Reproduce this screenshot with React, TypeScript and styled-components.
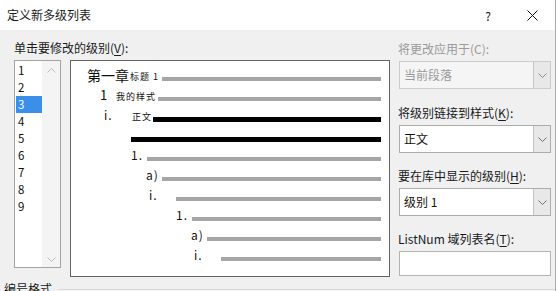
import styled, { createGlobalStyle } from 'styled-components';

const GlobalStyle = createGlobalStyle`
  html, body {
    margin: 0;
    padding: 0;
    background: #ffffff;
  }
  body {
    font-family: "Noto Sans CJK SC", "Noto Sans", sans-serif;
    color: #1a1a1a;
  }
`;

const Window = styled.div`
  width: 555px;
  height: 291px;
  border-right: 1px solid #a9a9a9;
  background: #f0f0f0;
  overflow: hidden;
  display: flex;
  flex-direction: column;
`;

const TitleBar = styled.div`
  height: 30px;
  flex-shrink: 0;
  background: #ffffff;
  display: flex;
  align-items: center;
  padding-left: 7px;
  font-size: 12px;
`;

const TitleText = styled.span`
  flex: 1;
  line-height: 16px;
  margin-top: -1px;
`;

const TitleButton = styled.span<{ $w: number }>`
  width: ${p => p.$w}px;
  height: 30px;
  display: flex;
  align-items: center;
  justify-content: center;
  font-size: 12px;
  color: #111;
`;

const Body = styled.div`
  display: flex;
  gap: 8px;
  padding: 10px 0 0 14px;
`;

const LeftPane = styled.div`
  width: 376px;
  display: flex;
  flex-direction: column;
`;

const Label = styled.div<{ $disabled?: boolean }>`
  font-size: 12px;
  line-height: 16px;
  height: 16px;
  white-space: nowrap;
  color: ${p => (p.$disabled ? '#9a9a9a' : '#1a1a1a')};
  margin-bottom: 4px;
`;

const Key = styled.span`
  text-decoration: underline;
  text-underline-offset: 2px;
`;

const ListRow = styled.div`
  display: flex;
  align-items: flex-start;
  gap: 9px;
`;

const ListBox = styled.div`
  width: 47px;
  height: 208px;
  box-sizing: border-box;
  border: 1px solid #a3a3a3;
  background: #ffffff;
  display: flex;
`;

const ListItems = styled.div`
  width: 27px;
  padding: 1px 0 0 1px;
  box-sizing: border-box;
`;

const ListItem = styled.div<{ $selected?: boolean }>`
  height: 17px;
  line-height: 17px;
  padding-left: 2px;
  font-size: 11.5px;
  background: ${p => (p.$selected ? '#3c8fe8' : 'transparent')};
  color: ${p => (p.$selected ? '#ffffff' : '#111111')};
`;

const ScrollTrack = styled.div`
  width: 18px;
  background: #f4f4f4;
  display: flex;
  flex-direction: column;
  justify-content: space-between;
  align-items: center;
  padding: 7px 0 5px;
`;

const Preview = styled.div`
  width: 321px;
  height: 217px;
  box-sizing: border-box;
  border: 1px solid #646464;
  background: #ffffff;
  padding-top: 6px;
`;

const LevelRow = styled.div<{ $indent: number }>`
  height: 20px;
  display: flex;
  align-items: flex-start;
  padding-left: ${p => p.$indent}px;
  padding-right: 8px;
`;

const Num = styled.span<{ $w: number; $size: number; $spacing: number }>`
  width: ${p => p.$w}px;
  flex-shrink: 0;
  font-size: ${p => p.$size}px;
  line-height: 16px;
  color: #111;
  white-space: nowrap;
  letter-spacing: ${p => p.$spacing}px;
`;

const StyleName = styled.span<{ $w: number }>`
  width: ${p => p.$w}px;
  flex-shrink: 0;
  font-size: 9px;
  line-height: 16px;
  padding-top: 2px;
  letter-spacing: 1px;
  white-space: nowrap;
  color: #111;
`;

const Bar = styled.div<{ $dark?: boolean }>`
  flex: 1;
  margin-top: 10px;
  height: ${p => (p.$dark ? 5 : 4)}px;
  background: ${p => (p.$dark ? '#000000' : '#a6a6a6')};
`;

const RightPane = styled.div`
  width: 153px;
  padding-top: 1px;
  display: flex;
  flex-direction: column;
`;

const Field = styled.div<{ $top: number }>`
  margin-top: ${p => p.$top}px;
`;

const Combo = styled.div<{ $disabled?: boolean }>`
  margin-left: 1px;
  width: 152px;
  height: 28px;
  box-sizing: border-box;
  border: 1px solid ${p => (p.$disabled ? '#cccccc' : '#acacac')};
  background: ${p => (p.$disabled ? '#f5f5f5' : '#ffffff')};
  display: flex;
`;

const ComboText = styled.span<{ $disabled?: boolean }>`
  flex: 1;
  padding-left: 4px;
  font-size: 12px;
  line-height: 26px;
  color: ${p => (p.$disabled ? '#9a9a9a' : '#111111')};
`;

const ComboButton = styled.span`
  width: 17px;
  box-sizing: border-box;
  border-left: 1px solid #c4c4c4;
  background: #e8e8e8;
  display: flex;
  align-items: center;
  justify-content: center;
`;

const TextInput = styled.div`
  margin-left: 1px;
  width: 152px;
  height: 25px;
  box-sizing: border-box;
  border: 1px solid #b4b4b4;
  background: #ffffff;
`;

const GroupLegend = styled.div`
  display: flex;
  align-items: center;
  gap: 6px;
  margin-top: 4px;
  padding-left: 4px;
  font-size: 12px;
  line-height: 16px;
`;

const GroupLine = styled.div`
  flex: 1;
  height: 1px;
  background: #d9d9d9;
`;

const Chevron = ({ up, color = '#bdbdbd' }: { up?: boolean; color?: string }) => (
  <svg width="9" height="5" viewBox="0 0 9 5">
    <polyline
      points={up ? '0.5,4.5 4.5,0.5 8.5,4.5' : '0.5,0.5 4.5,4.5 8.5,0.5'}
      fill="none"
      stroke={color}
      strokeWidth="1"
    />
  </svg>
);

const levels = [
  { indent: 16, num: '第一章', numW: 43, size: 14, spacing: 0, name: '标题 1', nameW: 32 },
  { indent: 29, num: '1', numW: 16, size: 13, spacing: 1, name: '我的样式', nameW: 42 },
  { indent: 33, num: 'i.', numW: 28, size: 12, spacing: 1, name: '正文', nameW: 21, dark: true },
  { indent: 60, dark: true },
  { indent: 60, num: '1.', numW: 16, size: 12, spacing: 1 },
  { indent: 75, num: 'a)', numW: 16, size: 12, spacing: 1 },
  { indent: 78, num: 'i.', numW: 27, size: 12, spacing: 1 },
  { indent: 105, num: '1.', numW: 16, size: 12, spacing: 1 },
  { indent: 120, num: 'a)', numW: 16, size: 12, spacing: 1 },
  { indent: 123, num: 'i.', numW: 27, size: 12, spacing: 1 },
];

export default function App() {
  return (
    <>
      <GlobalStyle />
      <Window>
        <TitleBar>
          <TitleText>定义新多级列表</TitleText>
          <TitleButton $w={44}>?</TitleButton>
          <TitleButton $w={45}>
            <svg width="11" height="11" viewBox="0 0 11 11">
              <path d="M0.5 0.5 L10.5 10.5 M10.5 0.5 L0.5 10.5" stroke="#111" strokeWidth="1" />
            </svg>
          </TitleButton>
        </TitleBar>

        <Body>
          <LeftPane>
            <Label>
              单击要修改的级别(<Key>V</Key>):
            </Label>
            <ListRow>
              <ListBox>
                <ListItems>
                  {[1, 2, 3, 4, 5, 6, 7, 8, 9].map(n => (
                    <ListItem key={n} $selected={n === 3}>
                      {n}
                    </ListItem>
                  ))}
                </ListItems>
                <ScrollTrack>
                  <Chevron up />
                  <Chevron />
                </ScrollTrack>
              </ListBox>

              <Preview>
                {levels.map((lv, i) => (
                  <LevelRow key={i} $indent={lv.indent}>
                    {lv.num && (
                      <Num $w={lv.numW!} $size={lv.size!} $spacing={lv.spacing!}>
                        {lv.num}
                      </Num>
                    )}
                    {lv.name && <StyleName $w={lv.nameW!}>{lv.name}</StyleName>}
                    <Bar $dark={lv.dark} />
                  </LevelRow>
                ))}
              </Preview>
            </ListRow>
          </LeftPane>

          <RightPane>
            <Field $top={0}>
              <Label $disabled>将更改应用于(C):</Label>
              <Combo $disabled>
                <ComboText $disabled>当前段落</ComboText>
                <ComboButton>
                  <Chevron color="#8a8a8a" />
                </ComboButton>
              </Combo>
            </Field>
            <Field $top={16}>
              <Label>
                将级别链接到样式(<Key>K</Key>):
              </Label>
              <Combo>
                <ComboText>正文</ComboText>
                <ComboButton>
                  <Chevron color="#707070" />
                </ComboButton>
              </Combo>
            </Field>
            <Field $top={15}>
              <Label>
                要在库中显示的级别(<Key>H</Key>):
              </Label>
              <Combo>
                <ComboText>级别 1</ComboText>
                <ComboButton>
                  <Chevron color="#707070" />
                </ComboButton>
              </Combo>
            </Field>
            <Field $top={15}>
              <Label>
                ListNum 域列表名(<Key>T</Key>):
              </Label>
              <TextInput />
            </Field>
          </RightPane>
        </Body>

        <GroupLegend>
          编号格式
          <GroupLine />
        </GroupLegend>
      </Window>
    </>
  );
}
